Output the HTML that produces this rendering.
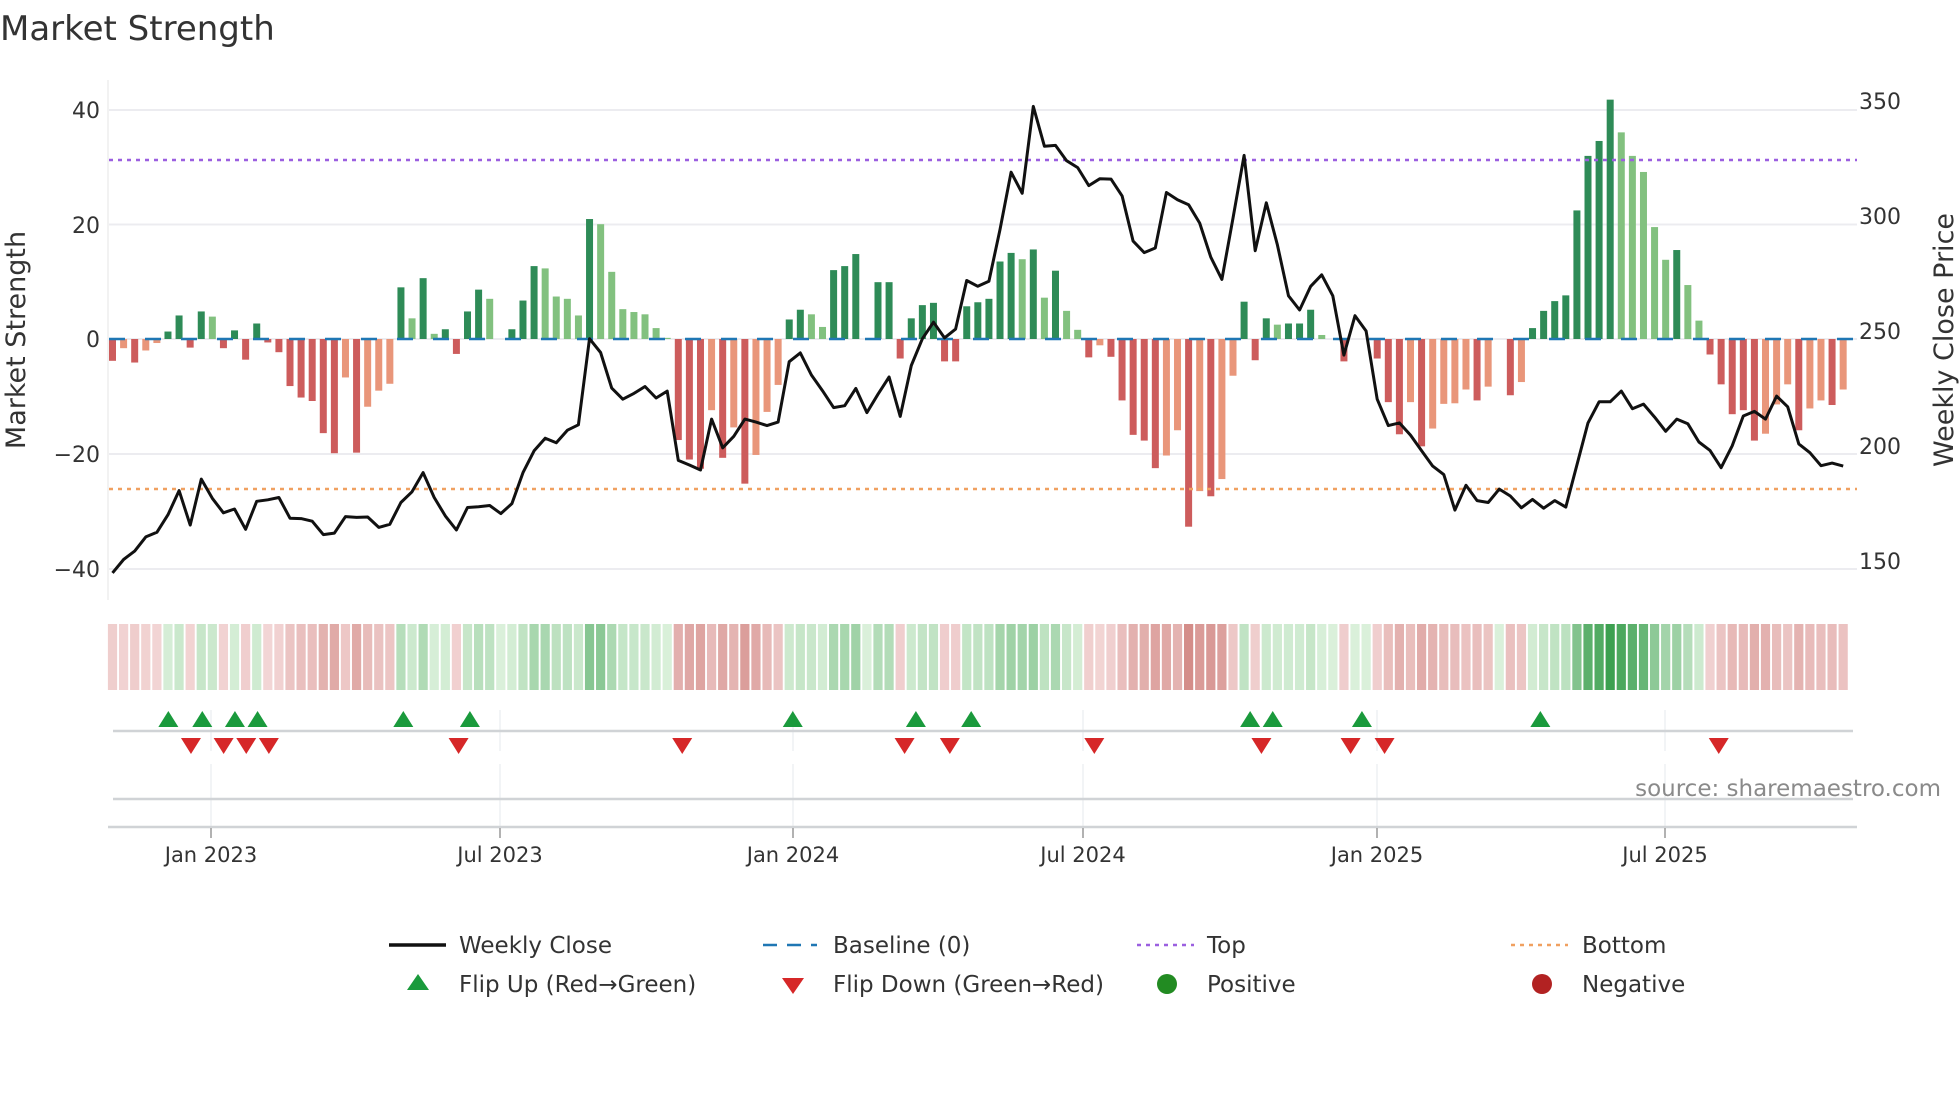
<!DOCTYPE html>
<html><head><meta charset="utf-8"><style>
html,body{margin:0;padding:0;background:#fff;}
svg{display:block;font-family:"DejaVu Sans","Liberation Sans",sans-serif;}
</style></head><body>
<svg id="s" width="1960" height="1102" viewBox="0 0 1960 1102" xmlns="http://www.w3.org/2000/svg">
<rect width="1960" height="1102" fill="#fff"/>
<text x="0" y="40" font-size="34" fill="#333">Market Strength</text>
<line x1="108" y1="80" x2="108" y2="600" stroke="#eee" stroke-width="1.5"/>
<g stroke="#ececf0" stroke-width="2">
<line x1="109" y1="110" x2="1857" y2="110"/><line x1="109" y1="224.5" x2="1857" y2="224.5"/>
<line x1="109" y1="339" x2="1857" y2="339"/><line x1="109" y1="454" x2="1857" y2="454"/>
<line x1="109" y1="569" x2="1857" y2="569"/>
</g>
<g font-size="22" fill="#333" text-anchor="end">
<text x="100" y="118">40</text><text x="100" y="233">20</text><text x="100" y="347">0</text>
<text x="100" y="462">−20</text><text x="100" y="577">−40</text>
</g>
<g font-size="22" fill="#333">
<text x="1859" y="109">350</text><text x="1859" y="224">300</text><text x="1859" y="339">250</text>
<text x="1859" y="454">200</text><text x="1859" y="569">150</text>
</g>
<text transform="translate(25,340) rotate(-90)" font-size="27" fill="#333" text-anchor="middle">Market Strength</text>
<text transform="translate(1953,340) rotate(-90)" font-size="27" fill="#333" text-anchor="middle">Weekly Close Price</text>
<g id="bars"></g>
<line x1="109" y1="339" x2="1857" y2="339" stroke="#1f77b4" stroke-width="2.5" stroke-dasharray="16,20"/>
<line x1="109" y1="160" x2="1857" y2="160" stroke="#9b5fe0" stroke-width="2.5" stroke-dasharray="4,5"/>
<line x1="109" y1="489" x2="1857" y2="489" stroke="#f0a060" stroke-width="2.5" stroke-dasharray="4,5"/>
<polyline id="price" fill="none" stroke="#111" stroke-width="3" stroke-linejoin="round"/>
<g id="heat"></g>
<g stroke="#eef0f2" stroke-width="1.5">
<line x1="211" y1="710" x2="211" y2="751"/><line x1="500" y1="710" x2="500" y2="751"/><line x1="793" y1="710" x2="793" y2="751"/><line x1="1083" y1="710" x2="1083" y2="751"/><line x1="1377" y1="710" x2="1377" y2="751"/><line x1="1665" y1="710" x2="1665" y2="751"/>
<line x1="211" y1="764" x2="211" y2="827"/><line x1="500" y1="764" x2="500" y2="827"/><line x1="793" y1="764" x2="793" y2="827"/><line x1="1083" y1="764" x2="1083" y2="827"/><line x1="1377" y1="764" x2="1377" y2="827"/><line x1="1665" y1="764" x2="1665" y2="827"/>
</g>
<line x1="113" y1="731" x2="1853" y2="731" stroke="#d0d3d6" stroke-width="2.5"/>
<line x1="113" y1="799" x2="1853" y2="799" stroke="#d0d3d6" stroke-width="2.5"/>
<line x1="108" y1="827" x2="1857" y2="827" stroke="#d0d3d6" stroke-width="2.5"/>
<g stroke="#999" stroke-width="1.5">
<line x1="211" y1="828" x2="211" y2="838"/><line x1="500" y1="828" x2="500" y2="838"/><line x1="793" y1="828" x2="793" y2="838"/><line x1="1083" y1="828" x2="1083" y2="838"/><line x1="1377" y1="828" x2="1377" y2="838"/><line x1="1665" y1="828" x2="1665" y2="838"/>
</g>
<g font-size="21" fill="#333" text-anchor="middle">
<text x="211" y="862">Jan 2023</text><text x="500" y="862">Jul 2023</text><text x="793" y="862">Jan 2024</text>
<text x="1083" y="862">Jul 2024</text><text x="1377" y="862">Jan 2025</text><text x="1665" y="862">Jul 2025</text>
</g>
<g id="marks"></g>
<text x="1941" y="796" font-size="23" fill="#8a8a8a" text-anchor="end">source: sharemaestro.com</text>
<g font-size="23" fill="#333">
<line x1="389" y1="945" x2="446" y2="945" stroke="#111" stroke-width="3.5"/>
<text x="459" y="953">Weekly Close</text>
<line x1="763" y1="945" x2="817" y2="945" stroke="#1f77b4" stroke-width="2.5" stroke-dasharray="14,10"/>
<text x="833" y="953">Baseline (0)</text>
<line x1="1137" y1="945" x2="1194" y2="945" stroke="#9b5fe0" stroke-width="2.5" stroke-dasharray="4,5"/>
<text x="1207" y="953">Top</text>
<line x1="1511" y1="945" x2="1568" y2="945" stroke="#f0a060" stroke-width="2.5" stroke-dasharray="4,5"/>
<text x="1582" y="953">Bottom</text>
<polygon points="418,974 429,990 407,990" fill="#1a9a3c"/>
<text x="459" y="992">Flip Up (Red→Green)</text>
<polygon points="782,978 804,978 793,994" fill="#d62728"/>
<text x="833" y="992">Flip Down (Green→Red)</text>
<circle cx="1167" cy="984" r="10" fill="#228b22"/>
<text x="1207" y="992">Positive</text>
<circle cx="1542" cy="984" r="10" fill="#b22222"/>
<text x="1582" y="992">Negative</text>
</g>
</svg>
<script>
var V="-3.8D -1.6L -4.1D -2L -0.7L 1.3D 4.1D -1.5D 4.8D 3.9L -1.6D 1.5D -3.6D 2.7D -0.6D -2.3D -8.2D -10.2D -10.8D -16.4D -19.9D -6.7L -19.8D -11.8L -9L -7.8L 9D 3.6L 10.6D 0.9L 1.7D -2.6D 4.8D 8.6D 7L 0L 1.7D 6.7D 12.7D 12.3L 7.4L 7L 4.1L 20.9D 20L 11.7L 5.2L 4.7L 4.3L 1.9L 0.2L -17.6D -21D -22.6D -12.4L -20.7D -15.4L -25.2D -20.2L -12.7L -8L 3.4D 5.1D 4.3L 2.1L 12D 12.7D 14.8D 0L 9.9D 9.9D -3.4D 3.6D 5.9D 6.3D -3.9D -3.9D 5.7D 6.4D 7D 13.5D 15D 13.9L 15.6D 7.2L 11.9D 4.9L 1.6L -3.2D -1.1L -3.1D -10.7D -16.7D -17.7D -22.5D -20.3L -15.9L -32.7D -26.5L -27.4D -24.4L -6.4L 6.5D -3.7D 3.6D 2.5L 2.7D 2.7D 5.1D 0.7L 0L -3.9D 0L 0L -3.4D -11D -16.6D -11L -18.7D -15.6L -11.3L -11.2L -8.8L -10.7D -8.3L 0L -9.8D -7.5L 1.9D 4.9D 6.6D 7.6D 22.4D 31.9D 34.5D 41.7D 36L 31.9L 29.1L 19.5L 13.8L 15.5D 9.4L 3.2L -2.7D -7.9D -13.1D -12.4D -17.7D -16.5L -11.4L -7.9L -15.9D -12.1L -10.7L -11.5D -8.8L".split(" ");
var P=[1497,1462,1440,1403,1391,1345,1282,1372,1252,1302,1340,1330,1383,1310,1306,1300,1354,1355,1362,1397,1393,1350,1352,1351,1378,1370,1313,1285,1235,1300,1348,1385,1326,1324,1321,1342,1316,1235,1178,1145,1157,1124,1110,885,921,1014,1043,1028,1010,1040,1022,1203,1215,1228,1095,1170,1140,1095,1103,1112,1103,945,922,980,1021,1065,1060,1015,1078,1030,985,1088,955,885,842,883,860,733,748,
735,600,450,505,278,382,380,420,438,485,467,468,512,630,660,648,503,522,535,583,672,730,570,406,655,530,640,773,810,748,718,773,928,825,865,1043,1112,1105,1137,1178,1218,1240,1333,1268,1308,1313,1278,1296,1327,1305,1328,1308,1325,1215,1105,1050,1050,1022,1068,1056,1090,1127,1095,1107,1155,1177,1222,1165,1087,1075,1095,1035,1063,1160,1183,1217,1210,1218];
var NS="http://www.w3.org/2000/svg";
function el(t,a,p){var e=document.createElementNS(NS,t);for(var k in a)e.setAttribute(k,a[k]);p.appendChild(e);return e;}
function X(i){return 112.5+i*11.094;}
function lerp(a,b,t){return "rgb("+a.map(function(v,k){return Math.round(v+(b[k]-v)*t);}).join(",")+")";}
var bars=document.getElementById("bars"),heat=document.getElementById("heat");
for(var i=0;i<V.length;i++){
 var s=V[i],d=s.slice(-1)=="D",v=parseFloat(s);
 var h=Math.abs(v)*5.74,x=X(i)-3.5;
 var c=v>=0?(d?"#2e8b57":"#82c17f"):(d?"#cd5c5c":"#e9967a");
 if(h>0.5)el("rect",{x:x,y:v>=0?339-h:339,width:7,height:h,fill:c},bars);
 var t=Math.min(Math.abs(v)/40,1);
 var hc=v>=0?lerp([218,240,218],[60,160,80],t):lerp([243,214,214],[205,125,120],t);
 el("rect",{x:X(i)-4.6,y:624,width:9.2,height:66,fill:hc},heat);
}
var pts=P.map(function(y,i){return X(i).toFixed(1)+","+(y/2.613).toFixed(1);}).join(" ");
document.getElementById("price").setAttribute("points",pts);
var m=document.getElementById("marks");
[134,161,187,205,321,374,631,729,773,995,1013,1084,1226].forEach(function(x){x*=1.2564;el("polygon",{points:x+",711 "+(x+10)+",727 "+(x-10)+",727",fill:"#1a9a3c"},m);});
[152,178,196,214,365,543,720,756,871,1004,1075,1102,1368].forEach(function(x){x*=1.2564;el("polygon",{points:(x-10)+",738 "+(x+10)+",738 "+x+",754",fill:"#d62728"},m);});
</script>
</body></html>
